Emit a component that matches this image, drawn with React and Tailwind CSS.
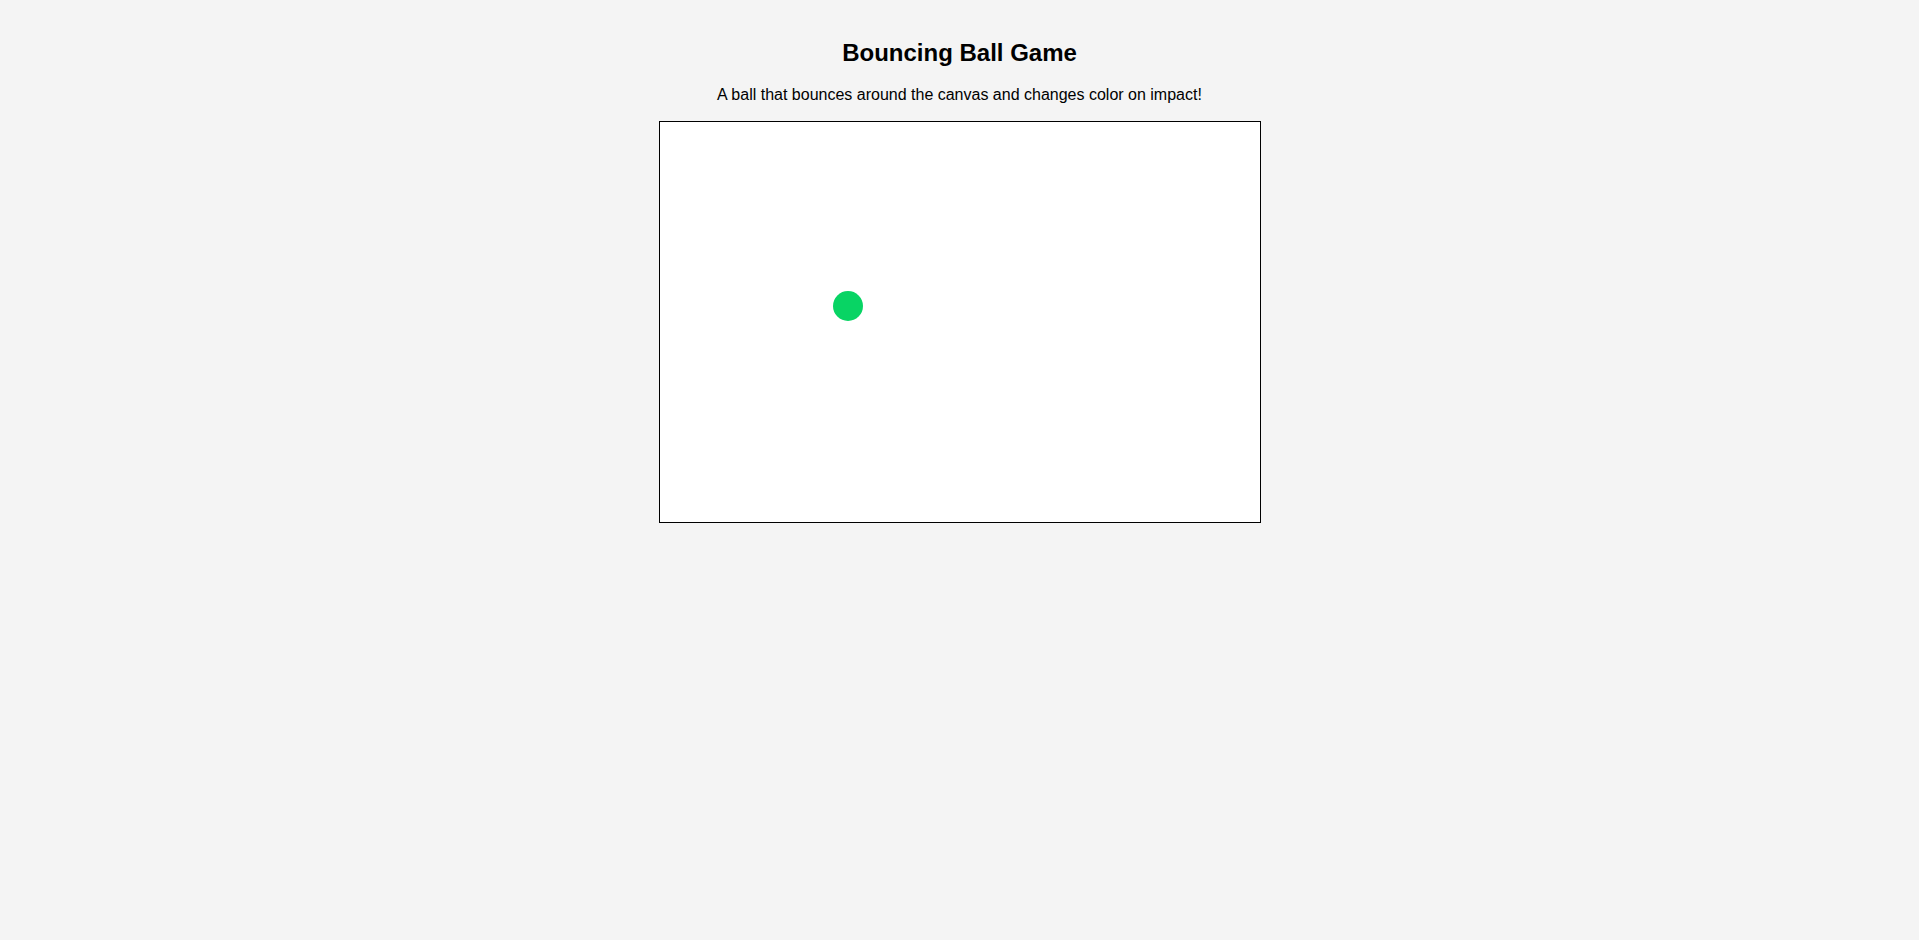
export default function App() {
  return (
    <div className="min-h-[940px] w-full bg-[#f4f4f4] flex flex-col items-center pt-[39px]" style={{ fontFamily: '"Liberation Sans", Arial, sans-serif' }}>
      <h1 className="text-[24px] font-bold leading-[28px] text-black">Bouncing Ball Game</h1>
      <p className="mt-[18px] text-[16px] leading-[20px] text-black">A ball that bounces around the canvas and changes color on impact!</p>
      <div className="mt-[16px] w-[602px] h-[402px] border border-black bg-white relative">
        <div className="absolute left-[173px] top-[169px] w-[30px] h-[30px] rounded-full bg-[#08d464]" />
      </div>
    </div>
  );
}
